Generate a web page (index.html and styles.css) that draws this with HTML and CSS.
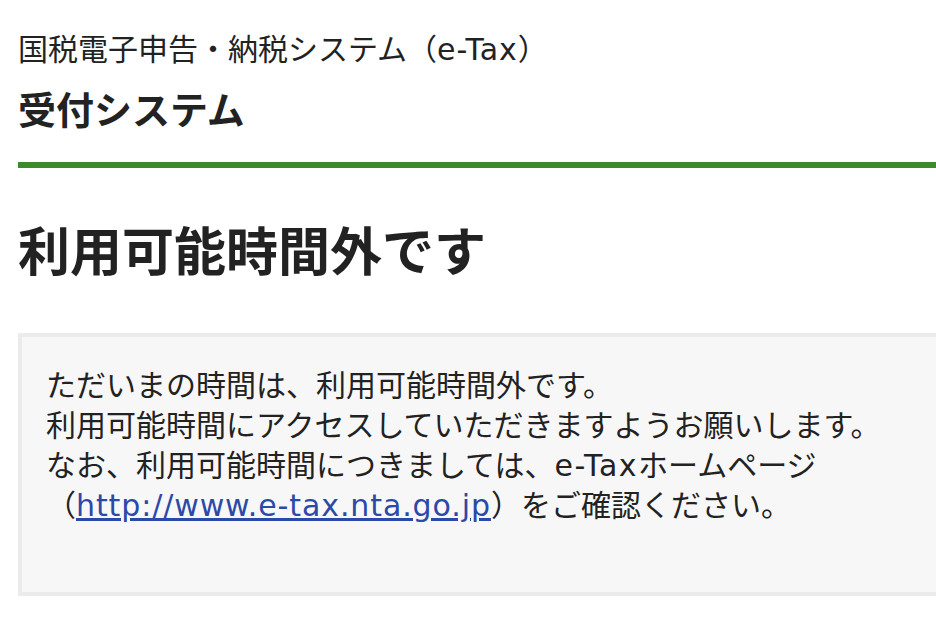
FILE: index.html
```html
<!DOCTYPE html>
<html lang="ja">
<head>
    <meta charset="UTF-8">
    <meta name="viewport" content="width=device-width, initial-scale=1.0">
    <title>利用可能時間外です</title>
    <link rel="stylesheet" href="styles.css">
</head>
<body>
    <div class="container">
        <div class="header">
            <p class="system-name">国税電子申告・納税システム（<span class="en">e-Tax</span>）</p>
            <p class="sub-name">受付システム</p>
        </div>

        <h1>利用可能時間外です</h1>

        <div class="message-box">
            <p>
                ただいまの時間は、利用可能時間外です。<br>
                利用可能時間にアクセスしていただきますようお願いします。<br>
                なお、利用可能時間につきましては、<span class="en en-wide">e-Tax</span>ホームページ<br>
                （<a href="#" class="en">http://www.e-tax.nta.go.jp</a>）をご確認ください。
            </p>
        </div>
    </div>
</body>
</html>
```

FILE: styles.css
```css
html, body {
    overflow: hidden;
}

body {
    font-family: "DejaVu Sans", "Noto Sans CJK JP", sans-serif;
    margin: 0;
    padding: 0 0 0 18px;
    background-color: #fff;
    color: #222;
}

.container {
    width: 1000px;
}

.header {
    padding-top: 30px;
    padding-bottom: 26px;
    border-bottom: 6px solid #3c8a2c;
}

.system-name {
    margin: 0 0 16px;
    font-size: 30px;
    line-height: 40px;
}

.sub-name {
    margin: 0;
    font-size: 38px;
    line-height: 50px;
    font-weight: bold;
}

h1 {
    margin: 50px 0 45px;
    font-size: 52px;
    line-height: 70px;
    font-weight: bold;
}

.en {
    letter-spacing: 0.9px;
}

.en-wide {
    letter-spacing: 1.5px;
}

.message-box {
    background-color: #f7f7f7;
    border: 4px solid #ebebeb;
    padding: 29px 24px 66px;
}

.message-box p {
    margin: 0;
    font-size: 30px;
    line-height: 40px;
}

.message-box a {
    color: #2b49a8;
    text-decoration: underline;
}
```
